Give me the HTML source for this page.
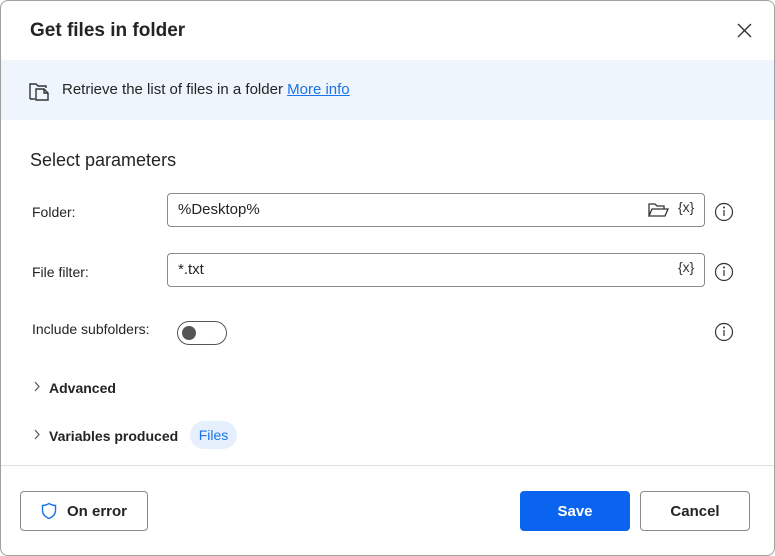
<!DOCTYPE html>
<html><head><style>
*{box-sizing:border-box;margin:0;padding:0}
body{width:775px;height:556px;background:#fff;font-family:"Liberation Sans",sans-serif;color:#242424;position:relative;overflow:hidden}
.frame{position:absolute;left:0;top:0;width:775px;height:556px;border:1px solid #a0a0a0;border-radius:8px;z-index:5}
.abs{position:absolute}
.title{left:30px;top:20px;font-size:19px;font-weight:bold;color:#242424}
.band{left:0;top:60px;width:775px;height:60px;background:#eff5fd}
.desc{left:62px;top:81px;font-size:15px;color:#242424}
.desc a{color:#1a73e8;text-decoration:underline}
.sec{left:30px;top:150px;font-size:18px}
.lbl{font-size:14px;color:#242424}
.inp{border:1px solid #8a8a8a;border-radius:4px;height:34px;left:167px;width:538px;font-size:15px;padding:7px 10px}
.bold{font-weight:bold;font-size:14px}
.btn{border:1px solid #8a8a8a;border-radius:4px;height:40px;font-size:15px;font-weight:bold;display:flex;align-items:center;justify-content:center}
</style></head><body><div class="frame"></div>
<div class="abs title">Get files in folder</div>
<svg class="abs" style="left:737px;top:23px" width="15" height="15" viewBox="0 0 15 15"><path d="M1 1L14 14M14 1L1 14" stroke="#333" stroke-width="1.4"/></svg>
<div class="abs band"></div>
<svg class="abs" style="left:28px;top:80px" width="24" height="22" viewBox="0 0 24 22"><path d="M2 19V4h6l2 2h8v2M2 19h5" fill="none" stroke="#333" stroke-width="1.4"/><path d="M8 9h8l4 4v7H8z M16 9v4h4" fill="none" stroke="#333" stroke-width="1.4"/></svg>
<div class="abs desc">Retrieve the list of files in a folder <a>More info</a></div>
<div class="abs sec">Select parameters</div>
<div class="abs lbl" style="left:32px;top:204px">Folder:</div>
<div class="abs inp" style="top:193px">%Desktop%</div>
<svg class="abs" style="left:648px;top:202px" width="22" height="16" viewBox="0 0 22 16"><path d="M1 14V2h6l2 2h7v3M1 14l3-7h16l-3 7z" fill="none" stroke="#333" stroke-width="1.3"/></svg>
<div class="abs" style="left:678px;top:199px;font-size:14px;color:#333">{x}</div>
<div class="abs lbl" style="left:32px;top:264px">File filter:</div>
<div class="abs inp" style="top:253px">*.txt</div>
<div class="abs" style="left:678px;top:259px;font-size:14px;color:#333">{x}</div>
<div class="abs lbl" style="left:32px;top:321px">Include subfolders:</div>
<div class="abs" style="left:177px;top:321px;width:50px;height:24px;border:1.3px solid #555;border-radius:12px"><div style="position:absolute;left:4px;top:4px;width:14px;height:14px;border-radius:50%;background:#555"></div></div>
<svg class="abs" style="left:714px;top:202px" width="20" height="140" viewBox="0 0 20 140"><g fill="none" stroke="#333" stroke-width="1.2"><circle cx="10" cy="10" r="8.5"/><circle cx="10" cy="70" r="8.5"/><circle cx="10" cy="130" r="8.5"/><path d="M10 8v6M10 68v6M10 128v6"/></g><g fill="#333"><circle cx="10" cy="5.5" r="1"/><circle cx="10" cy="65.5" r="1"/><circle cx="10" cy="125.5" r="1"/></g></svg>
<svg class="abs" style="left:33px;top:381px" width="8" height="60" viewBox="0 0 8 60"><path d="M2 1l4 4.5L2 10M2 49l4 4.5L2 58" fill="none" stroke="#555" stroke-width="1.2"/></svg>
<div class="abs bold" style="left:49px;top:380px">Advanced</div>
<div class="abs bold" style="left:49px;top:428px">Variables produced</div>
<div class="abs" style="left:190px;top:421px;width:47px;height:28px;border-radius:14px;background:#e6f0fd;color:#1a73e8;font-size:14px;text-align:center;line-height:28px">Files</div>
<div class="abs" style="left:0;top:465px;width:775px;height:1px;background:#e0e0e0"></div>
<div class="abs btn" style="left:20px;top:491px;width:128px"><svg width="16" height="18" viewBox="0 0 16 18" style="margin-right:10px"><path d="M8 1.5C5.5 3 3.5 3.5 1.5 3.5v5c0 4 3 6.5 6.5 8 3.5-1.5 6.5-4 6.5-8v-5c-2 0-4-.5-6.5-2z" fill="none" stroke="#1a73e8" stroke-width="1.4"/></svg><span>On error</span></div>
<div class="abs btn" style="left:520px;top:491px;width:110px;background:#0a64f0;border-color:#0a64f0;color:#fff">Save</div>
<div class="abs btn" style="left:640px;top:491px;width:110px">Cancel</div>
</body></html>
